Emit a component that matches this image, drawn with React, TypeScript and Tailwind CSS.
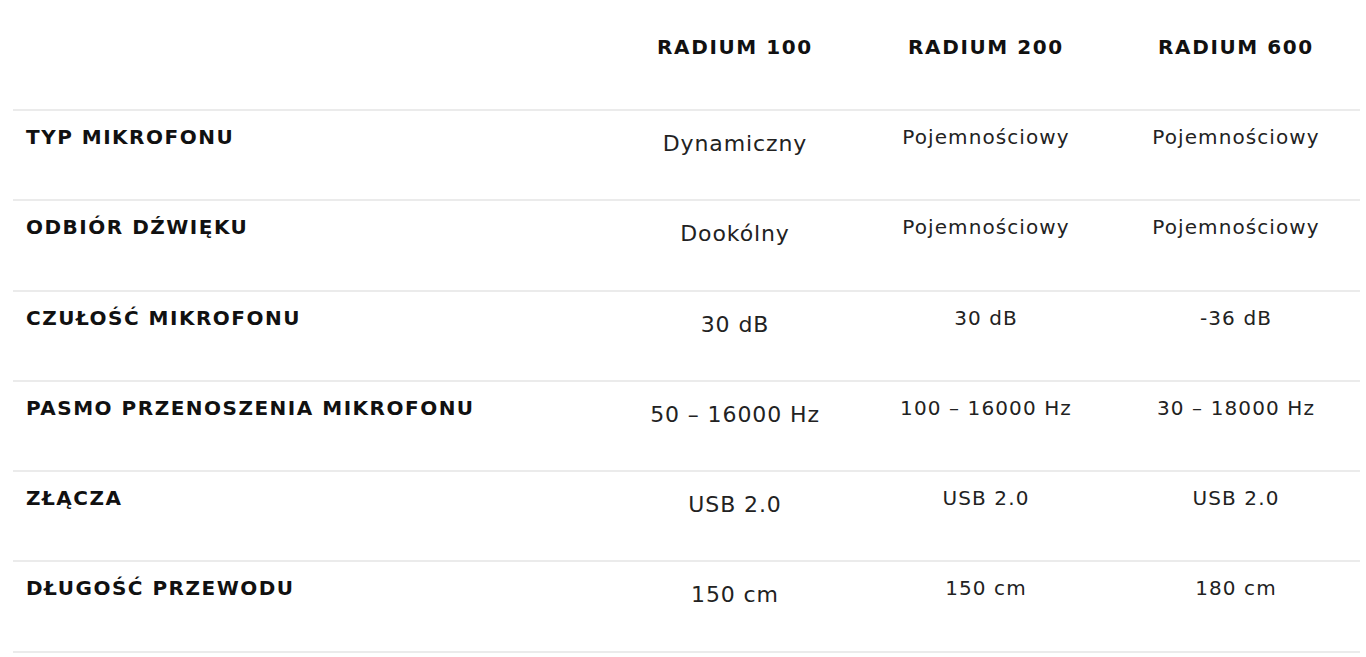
const models = ['RADIUM 100', 'RADIUM 200', 'RADIUM 600']

// ── Spec rows ──
const rows: { label: string; values: [string, string, string] }[] = [
  { label: 'TYP MIKROFONU', values: ['Dynamiczny', 'Pojemnościowy', 'Pojemnościowy'] },
  { label: 'ODBIÓR DŹWIĘKU', values: ['Dookólny', 'Pojemnościowy', 'Pojemnościowy'] },
  { label: 'CZUŁOŚĆ MIKROFONU', values: ['30 dB', '30 dB', '-36 dB'] },
  { label: 'PASMO PRZENOSZENIA MIKROFONU', values: ['50 – 16000 Hz', '100 – 16000 Hz', '30 – 18000 Hz'] },
  { label: 'ZŁĄCZA', values: ['USB 2.0', 'USB 2.0', 'USB 2.0'] },
  { label: 'DŁUGOŚĆ PRZEWODU', values: ['150 cm', '150 cm', '180 cm'] },
]

const cols = 'grid grid-cols-[597px_250px_252px_248px]'

export default function App() {
  return (
    <div className="min-h-screen w-full bg-white font-['DejaVu_Sans',Verdana,sans-serif] text-[#1c1c1c]">
      <div className="ml-[13px] w-[1347px]">
        {/* header */}
        <div className={`${cols} h-[111px] border-b-2 border-[#ebebeb]`}>
          <div />
          {models.map((m) => (
            <div
              key={m}
              className="pt-[33px] text-center text-[20px] leading-[28px] font-bold tracking-[1.6px] text-[#111]"
            >
              {m}
            </div>
          ))}
        </div>

        {/* body */}
        {rows.map((r) => (
          <div key={r.label} className={`${cols} h-[90.3px] border-b-2 border-[#ebebeb]`}>
            <div className="pt-[12px] pl-[13px] text-[20px] leading-[28px] font-bold tracking-[1.5px] text-[#111]">
              {r.label}
            </div>
            <div className="pt-[19px] text-center text-[22px] leading-[28px] tracking-[0.9px] text-[#222]">
              {r.values[0]}
            </div>
            <div className="pt-[12px] text-center text-[20px] leading-[28px] tracking-[1.1px] text-[#222]">
              {r.values[1]}
            </div>
            <div className="pt-[12px] text-center text-[20px] leading-[28px] tracking-[1.1px] text-[#222]">
              {r.values[2]}
            </div>
          </div>
        ))}
      </div>
    </div>
  )
}
